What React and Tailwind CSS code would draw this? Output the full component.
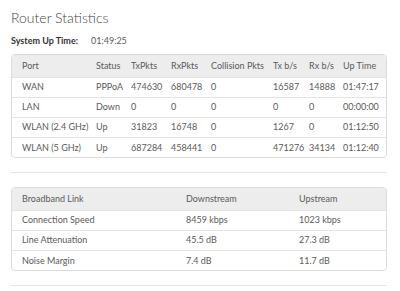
import React from "react";

const ports = [
  ["WAN", "PPPoA", "474630", "680478", "0", "16587", "14888", "01:47:17"],
  ["LAN", "Down", "0", "0", "0", "0", "0", "00:00:00"],
  ["WLAN (2.4 GHz)", "Up", "31823", "16748", "0", "1267", "0", "01:12:50"],
  ["WLAN (5 GHz)", "Up", "687284", "458441", "0", "471276", "34134", "01:12:40"],
];

const portHead = ["Port", "Status", "TxPkts", "RxPkts", "Collision Pkts", "Tx b/s", "Rx b/s", "Up Time"];
const portWidths = ["w-[84px]", "w-[35px]", "w-[40px]", "w-[40px]", "w-[62px]", "w-[36px]", "w-[34px]", ""];

const broadband = [
  ["Connection Speed", "8459 kbps", "1023 kbps"],
  ["Line Attenuation", "45.5 dB", "27.3 dB"],
  ["Noise Margin", "7.4 dB", "11.7 dB"],
];

function StatTable({ head, rows, widths }) {
  return (
    <div className="border border-[#dcdcdc] rounded-[4px] overflow-hidden">
      <table className="w-full table-fixed border-collapse">
        <colgroup>
          {widths.map((w, i) => (
            <col key={i} className={w} />
          ))}
        </colgroup>
        <thead>
          <tr className="bg-[#ededed] h-[22px]">
            {head.map((h, i) => (
              <th
                key={i}
                className={`text-left font-normal whitespace-nowrap ${i === 0 ? "pl-[10px]" : ""}`}
              >
                {h}
              </th>
            ))}
          </tr>
        </thead>
        <tbody>
          {rows.map((r, ri) => (
            <tr key={ri} className="h-[20px] border-t border-[#e3e3e3]">
              {r.map((c, i) => (
                <td key={i} className={`whitespace-nowrap ${i === 0 ? "pl-[10px]" : ""}`}>
                  {c}
                </td>
              ))}
            </tr>
          ))}
        </tbody>
      </table>
    </div>
  );
}

export default function App() {
  return (
    <div
      className="w-[400px] h-[291px] bg-white px-[11px] pt-[9px] text-[9px] text-[#5a5a5a] overflow-hidden"
      style={{ fontFamily: "Lato, 'Open Sans', sans-serif" }}
    >
      <h1 className="text-[14px] leading-[18px] text-[#444] font-light">Router Statistics</h1>
      <div className="flex items-center mt-[8px] h-[12px] w-[376px]">
        <span className="w-[80px] font-bold text-[#333]">System Up Time:</span>
        <span>01:49:25</span>
      </div>
      <div className="w-[376px] mt-[7px]">
        <StatTable head={portHead} rows={ports} widths={portWidths} />
        <div className="h-px bg-[#e6e6e6] mt-[14px]" />
        <div className="mt-[14px]">
          <StatTable
            head={["Broadband Link", "Downstream", "Upstream"]}
            rows={broadband}
            widths={["w-[174px]", "w-[113px]", ""]}
          />
        </div>
        <div className="h-px bg-[#e6e6e6] mt-[14px]" />
      </div>
    </div>
  );
}
